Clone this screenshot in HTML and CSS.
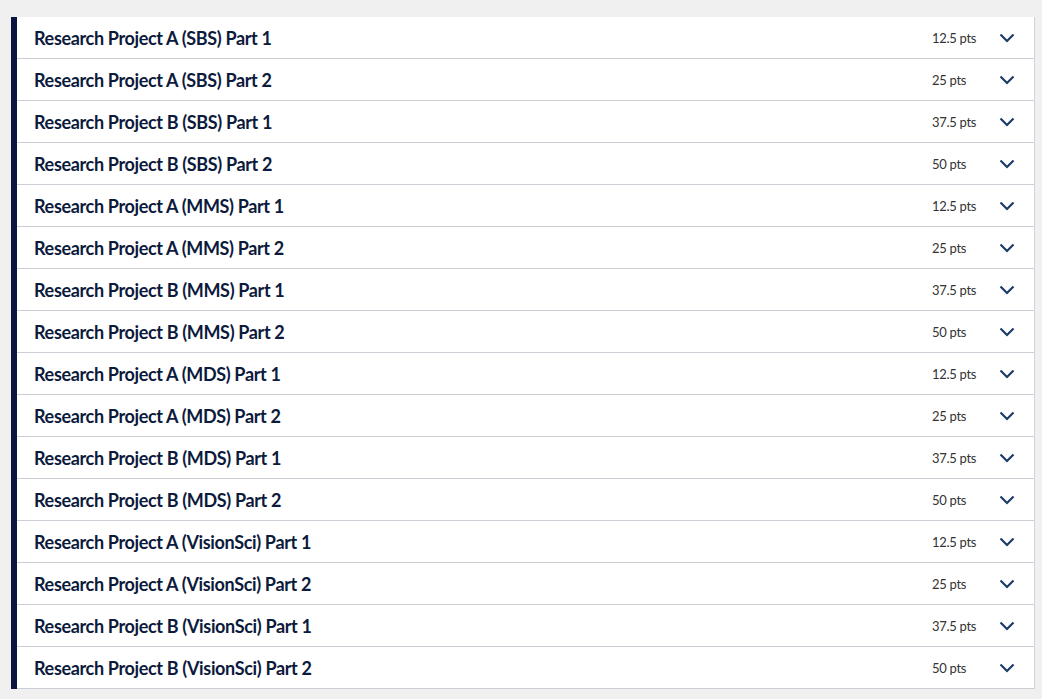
FILE: index.html
```html
<!DOCTYPE html>
<html lang="en">
<head>
    <meta charset="UTF-8">
    <title>Research Projects</title>
    <link rel="stylesheet" href="styles.css">
</head>
<body>
    <ul class="accordion" id="list"></ul>
    <script>
        const items = [
            ['Research Project A (SBS) Part 1', '12.5'],
            ['Research Project A (SBS) Part 2', '25'],
            ['Research Project B (SBS) Part 1', '37.5'],
            ['Research Project B (SBS) Part 2', '50'],
            ['Research Project A (MMS) Part 1', '12.5'],
            ['Research Project A (MMS) Part 2', '25'],
            ['Research Project B (MMS) Part 1', '37.5'],
            ['Research Project B (MMS) Part 2', '50'],
            ['Research Project A (MDS) Part 1', '12.5'],
            ['Research Project A (MDS) Part 2', '25'],
            ['Research Project B (MDS) Part 1', '37.5'],
            ['Research Project B (MDS) Part 2', '50'],
            ['Research Project A (VisionSci) Part 1', '12.5'],
            ['Research Project A (VisionSci) Part 2', '25'],
            ['Research Project B (VisionSci) Part 1', '37.5'],
            ['Research Project B (VisionSci) Part 2', '50']
        ];
        const chevron = '<svg class="chevron" width="16" height="10" viewBox="0 0 16 10"><path d="M1.5 1.5 L8 8 L14.5 1.5" fill="none" stroke="currentColor" stroke-width="2.2"/></svg>';
        document.getElementById('list').innerHTML = items.map(([name, pts]) =>
            '<li class="row"><span class="title">' + name + '</span>' +
            '<span class="pts">' + pts + ' pts</span>' + chevron + '</li>'
        ).join('');
    </script>
</body>
</html>
```

FILE: styles.css
```css
body {
    margin: 0;
    background: #f0f0f0;
    font-family: 'Source Sans Pro', 'Lato', sans-serif;
    padding: 17px 7px 0 11px;
}
.accordion {
    list-style: none;
    margin: 0;
    padding: 0;
    background: #fff;
    border-left: 6px solid #0a1640;
    border-right: 1px solid #cfd4d8;
}
.row {
    display: flex;
    align-items: center;
    height: 41px;
    border-bottom: 1px solid #c9cfd4;
    padding: 0 19px 0 17px;
}
.title {
    flex: 1;
    font-size: 18px;
    font-weight: bold;
    color: #0c1a3c;
    letter-spacing: -0.35px;
}
.pts {
    width: 67px;
    font-size: 13px;
    color: #333;
    letter-spacing: -0.3px;
}
.chevron {
    color: #1c3b68;
    display: block;
}
```
